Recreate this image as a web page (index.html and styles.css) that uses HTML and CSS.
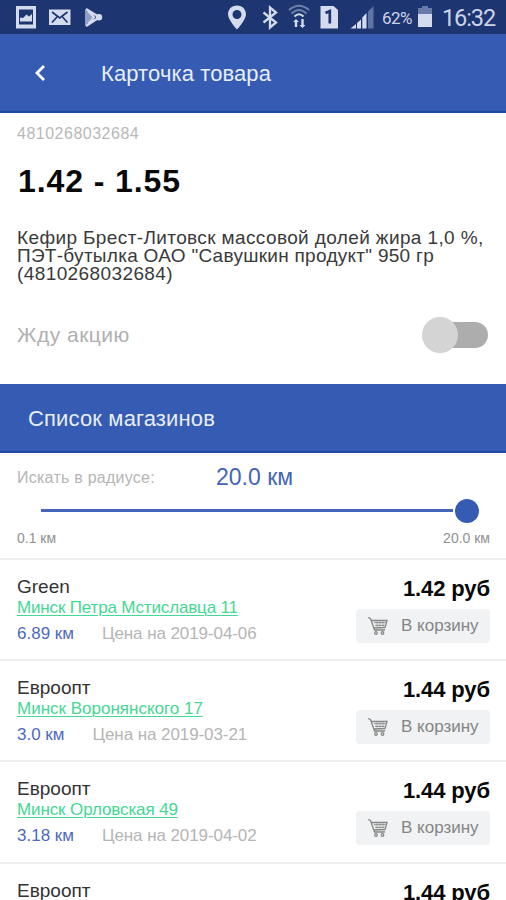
FILE: index.html
```html
<!DOCTYPE html>
<html lang="ru">
<head>
<meta charset="utf-8">
<title>Карточка товара</title>
<link rel="stylesheet" href="styles.css">
</head>
<body>
<svg width="0" height="0" class="defs">
  <symbol id="cart" viewBox="0 0 22 20">
    <path d="M1 1.5 3.5 2.500 7.500 14H18M4.500 4.500H20L18 11.500 7 12" fill="none" stroke="currentColor" stroke-width="1.300"/>
    <path d="M7 6.700H18.500M8 9.300H17.500" fill="none" stroke="currentColor" stroke-width="1"/>
    <path d="M10 5V11M13 5V11M16 5V11" fill="none" stroke="currentColor" stroke-width=".5"/>
    <circle cx="9" cy="17" r="1.300" fill="none" stroke="currentColor" stroke-width="1.200"/>
    <circle cx="15.500" cy="17" r="1.300" fill="none" stroke="currentColor" stroke-width="1.200"/>
  </symbol>
</svg>
<div class="status">
  <svg class="status-left" width="110" height="34" viewBox="0 0 110 34">
    <path fill="#d4dbed" fill-rule="evenodd" d="M16 6H36V28.500H16ZM19 9.500V24.500H33V9.500ZM20 21.500V17.500L23 18 26.500 14.500 29 16.500 32 14V21.500Z"/>
    <path fill="#d4dbed" d="M49 9.500H70.500V25H49Z"/>
    <path fill="none" stroke="#1d3570" stroke-width="1.700" d="M52 12 59.700 18 67.500 12M52 22.500 57 17M67.500 22.500 62.500 17"/>
    <path fill="#8f9fc6" d="M85 9 92.500 17.300 85 26Z"/>
    <path fill="none" stroke="#d4dbed" stroke-width="2.400" stroke-linejoin="round" d="M86 9 97.500 16M86 26 97.500 18.500M88 11 94 17.300 88 24"/>
    <circle cx="99" cy="17.300" r="3.200" fill="#d4dbed"/>
  </svg>
  <svg class="status-icons" width="152" height="34" viewBox="225 0 152 34">
    <path fill="#d4dbed" fill-rule="evenodd" d="M237 5.500C231.500 5.500 228 9.500 228 14.300 228 20 237 29.500 237 29.500S246 20 246 14.300C246 9.500 242.500 5.500 237 5.500ZM237 10A4.500 4.500 0 1 1 237 19 4.500 4.500 0 1 1 237 10Z"/>
    <path fill="none" stroke="#d4dbed" stroke-width="2.300" d="M263.500 12.500 276 22.500 270 27.500V7.500L276 12.500 263.500 22.500"/>
    <g fill="none" stroke-width="2">
      <path stroke="#6f80aa" d="M289 10Q299 1.500 309 10M291.500 13.500Q299 6.500 306.500 13.500"/>
      <path stroke="#d4dbed" d="M294.500 16.500Q299 12 303.500 16.500"/>
    </g>
    <path fill="#d4dbed" d="M296 19 299 22H297.200V27H294.800V22H293ZM302.500 28 299.500 25H301.300V19H303.700V25H305.500Z"/>
    <path fill="#d4dbed" d="M320.500 6H333.500L338 10V28.500H320.500Z"/>
    <path fill="none" stroke="#1d3570" stroke-width="2.700" d="M325.500 13 329.800 11V23.500"/>
    <path fill="#d4dbed" d="M350.500 28.500 356 24V28.500ZM357 23 361 19.500V28.500H357ZM362.300 17.500 366.500 13V28.500H362.300Z"/>
    <path fill="#6074a4" d="M368 11.500 373.500 6V28.500H368Z"/>
  </svg>
  <span class="percent">62%</span>
  <svg class="battery" width="16" height="24" viewBox="0 0 16 24"><path fill="#687aa7" d="M5 1H11V3H15V9H1V3H5Z"/><path fill="#d4dbed" d="M1 9H15V22H1Z"/></svg>
  <span class="clock">16:32</span>
</div>
<header class="appbar">
  <svg class="back" width="12" height="18" viewBox="0 0 12 18"><path d="M10 2 3 9 10 16" fill="none" stroke="#fff" stroke-width="2.800"/></svg>
  <h1>Карточка товара</h1>
</header>
<section class="product">
  <div class="code">4810268032684</div>
  <div class="range">1.42 - 1.55</div>
  <div class="desc"><div class="d1">Кефир Брест-Литовск массовой долей жира 1,0 %,</div><div class="d2">ПЭТ-бутылка ОАО "Савушкин продукт" 950 гр</div><div class="d3">(4810268032684)</div></div>
  <div class="wait"><span>Жду акцию</span><i class="switch"></i></div>
</section>
<h2 class="section">Список магазинов</h2>
<section class="filter">
  <div class="radius"><span class="label">Искать в радиусе:</span><span class="value">20.0 км</span></div>
  <div class="slider"><i class="track"></i><i class="thumb"></i></div>
  <div class="limits"><span class="min">0.1 км</span><span class="max">20.0 км</span></div>
</section>
<main>
  <article class="shop">
    <div class="info"><div class="name">Green</div><a class="a1">Минск Петра Мстиславца 11</a><div class="meta"><span class="dist">6.89 км</span><span class="date">Цена на 2019-04-06</span></div></div>
    <div class="buy"><div class="price">1.42 руб</div><div class="btn"><svg width="22" height="20"><use href="#cart"/></svg><span>В корзину</span></div></div>
  </article>
  <article class="shop">
    <div class="info"><div class="name">Евроопт</div><a class="a2">Минск Воронянского 17</a><div class="meta"><span class="dist">3.0 км</span><span class="date">Цена на 2019-03-21</span></div></div>
    <div class="buy"><div class="price">1.44 руб</div><div class="btn"><svg width="22" height="20"><use href="#cart"/></svg><span>В корзину</span></div></div>
  </article>
  <article class="shop">
    <div class="info"><div class="name">Евроопт</div><a class="a3">Минск Орловская 49</a><div class="meta"><span class="dist">3.18 км</span><span class="date">Цена на 2019-04-02</span></div></div>
    <div class="buy"><div class="price">1.44 руб</div><div class="btn"><svg width="22" height="20"><use href="#cart"/></svg><span>В корзину</span></div></div>
  </article>
  <article class="shop last">
    <div class="info"><div class="name">Евроопт</div></div>
    <div class="buy"><div class="price">1.44 руб</div></div>
  </article>
</main>
</body>
</html>
```
FILE: styles.css
```css
* { box-sizing: border-box; }
html, body { height: 900px; overflow: hidden; }
body { margin: 0; background: #fff; color: #333; font-family: "Liberation Sans", Arial, sans-serif; white-space: nowrap; }
.defs { display: block; position: absolute; }
.status { height: 34px; background: #1d3570; display: flex; align-items: center; color: #ccd4e8; font-family: Roboto, sans-serif; }
.status svg { flex: none; }
.status-icons { margin-left: 115px; }
.percent { width: 33px; margin-left: 5px; font-size: 17px; letter-spacing: -0.5px; padding-top: 2px; }
.battery { margin-left: 2px; }
.clock { margin-left: 9px; font-size: 23.500px; letter-spacing: -1.100px; padding-top: 2px; }
.appbar { height: 79px; background: #355bb3; border-bottom: 2px solid #1948a3; display: flex; align-items: center; padding-left: 34px; color: #e8eefb; }
h1 { margin: 2px 0 0 55px; font-size: 22px; font-weight: 400; letter-spacing: 0.1px; }
.product { height: 271px; padding: 11px 17px 0; }
.code { height: 20px; line-height: 20px; font-size: 16px; color: #b8b8b8; letter-spacing: 0.5px; }
.range { height: 44px; margin-top: 15px; padding-left: 1px; line-height: 44px; font-size: 32px; font-weight: 700; color: #080808; letter-spacing: 0.9px; }
.desc { margin-top: 26px; font-size: 19px; line-height: 18px; color: #3a3a3a; }
.d1 { letter-spacing: 0.380px; }
.d2 { letter-spacing: 0.280px; }
.d3 { letter-spacing: 0.400px; }
.wait { height: 36px; margin-top: 34px; display: flex; align-items: center; justify-content: space-between; font-size: 21px; letter-spacing: 0.5px; color: #b0b0b0; }
.switch { position: relative; left: 0; width: 67px; height: 36px; display: flex; align-items: center; }
.wait { padding-right: 0; }
.switch::before { content: ""; position: absolute; left: 17px; top: 5px; width: 49px; height: 26px; border-radius: 13px; background: #adadad; }
.switch::after { content: ""; position: relative; width: 36px; height: 36px; border-radius: 50%; background: #d4d4d4; }
.section { margin: 0; height: 69px; line-height: 69px; padding-left: 28px; background: #355bb3; color: #e8eefb; border-bottom: 2px solid #1f4ba6; font-size: 22px; font-weight: 400; letter-spacing: 0.150px; }
.filter { height: 107px; padding: 10px 16px 0 17px; border-bottom: 2px solid #eee; }
.radius { display: flex; height: 30px; line-height: 30px; }
.label { width: 199px; font-size: 16px; letter-spacing: 0.250px; color: #b5b5b5; }
.value { font-size: 23px; line-height: 28px; color: #4265b5; }
.slider { height: 35px; margin-bottom: 1px; display: flex; align-items: center; padding-left: 24px; }
.track { width: 412px; height: 3px; background: #4565b8; }
.thumb { width: 24px; height: 24px; margin-left: 2px; border-radius: 50%; background: #355bb3; }
.limits { display: flex; justify-content: space-between; height: 20px; line-height: 19px; font-size: 14px; color: #909090; }
.shop { height: 101.200px; display: flex; justify-content: space-between; padding: 15px 16px 0 17px; border-bottom: 2px solid #eee; }
.last { height: 37px; border: 0; }
.name { height: 23px; line-height: 24px; font-size: 19px; }
.shop a { display: block; width: max-content; height: 20px; line-height: 20px; font-size: 17px; color: #43d893; text-decoration: underline; text-decoration-thickness: 1px; text-underline-offset: 2px; }
.a1 { letter-spacing: -0.160px; }
.a3 { letter-spacing: -0.110px; }
.meta { display: flex; gap: 28px; margin-top: 4px; height: 24px; line-height: 23px; font-size: 17px; }
.dist { color: #4d69bd; }
.date { color: #b5b5b5; letter-spacing: -0.080px; }
.buy { display: flex; flex-direction: column; align-items: flex-end; }
.price { height: 28px; line-height: 28px; font-size: 22px; font-weight: 700; color: #080808; letter-spacing: -0.100px; }
.btn { width: 134px; height: 34px; margin-top: 6px; display: flex; align-items: center; gap: 12px; padding-left: 11px; border-radius: 4px; background: #f0f2f3; color: #858585; font-size: 17px; }
```
